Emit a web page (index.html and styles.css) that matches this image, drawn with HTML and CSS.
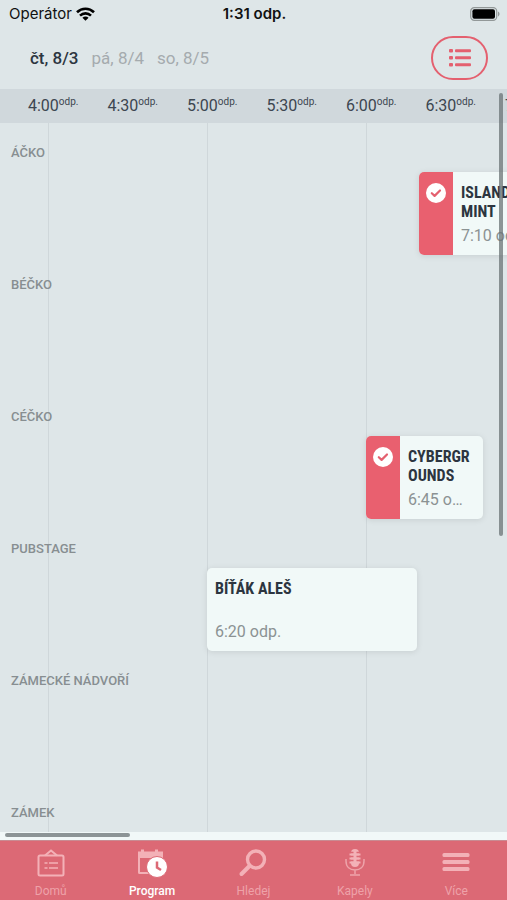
FILE: index.html
```html
<!DOCTYPE html>
<html lang="cs">
<head>
    <meta charset="UTF-8">
    <meta name="viewport" content="width=device-width, initial-scale=1.0">
    <title>Program</title>
    <link rel="stylesheet" href="styles.css">
</head>
<body>
    <div class="status-bar">
        <div class="carrier">
            <span>Operátor</span>
            <svg width="19" height="14" viewBox="0 0 19 14" fill="none" stroke="#000" stroke-width="2.6">
                <path d="M1 5.2C5.8.5 13.2.5 18 5.2"/>
                <path d="M4 8.6c3.2-3 7.8-3 11 0"/>
                <path d="M9.5 13.8L6.4 10.7c1.8-1.6 4.4-1.6 6.2 0z" fill="#000" stroke="none"/>
            </svg>
        </div>
        <div class="clock">1:31 odp.</div>
        <svg class="battery" width="30" height="14" viewBox="0 0 30 14">
            <rect x="0.7" y="0.7" width="26" height="12.6" rx="3.6" fill="none" stroke="#929898" stroke-width="1.2"/>
            <rect x="2.4" y="2.3" width="22.6" height="9.4" rx="2" fill="#000"/>
            <path d="M28 4.6c2 .8 2 4 0 4.8z" fill="#929898"/>
        </svg>
    </div>

    <header class="header">
        <nav class="days">
            <button type="button" class="day active">čt, 8/3</button>
            <button type="button" class="day">pá, 8/4</button>
            <button type="button" class="day">so, 8/5</button>
        </nav>
        <button type="button" class="list-btn" aria-label="Seznam">
            <svg width="24" height="20" viewBox="0 0 24 20" fill="#e4606f">
                <rect x="1" y="1" width="4" height="3.4" rx="1"/>
                <rect x="7" y="1.2" width="16" height="3" rx="1"/>
                <rect x="1" y="8" width="4" height="3.4" rx="1"/>
                <rect x="7" y="8.2" width="16" height="3" rx="1"/>
                <rect x="1" y="15" width="4" height="3.4" rx="1"/>
                <rect x="7" y="15.2" width="16" height="3" rx="1"/>
            </svg>
        </button>
    </header>

    <main class="schedule">
        <div class="hours">
            <span>4:00<sup>odp.</sup></span>
            <span>4:30<sup>odp.</sup></span>
            <span>5:00<sup>odp.</sup></span>
            <span>5:30<sup>odp.</sup></span>
            <span>6:00<sup>odp.</sup></span>
            <span>6:30<sup>odp.</sup></span>
            <span>7:00<sup>odp.</sup></span>
        </div>

        <!-- --start and --length are minutes from 4:00 -->
        <div class="stages">
            <section class="stage">
                <h2>Áčko</h2>
                <article class="event" style="--start: 140; --length: 50">
                    <div class="event-mark">
                        <svg width="20" height="20" viewBox="0 0 20 20">
                            <circle cx="10" cy="10" r="10" fill="#fff"/>
                            <path d="M5.8 10.2l2.8 2.7 5.4-5.4" fill="none" stroke="#e4606f" stroke-width="2.2" stroke-linecap="round" stroke-linejoin="round"/>
                        </svg>
                    </div>
                    <div class="event-text">
                        <h3>Island Mint</h3>
                        <p>7:10 odp.</p>
                    </div>
                </article>
            </section>
            <section class="stage">
                <h2>Béčko</h2>
            </section>
            <section class="stage">
                <h2>Céčko</h2>
                <article class="event" style="--start: 120; --length: 45">
                    <div class="event-mark">
                        <svg width="20" height="20" viewBox="0 0 20 20">
                            <circle cx="10" cy="10" r="10" fill="#fff"/>
                            <path d="M5.8 10.2l2.8 2.7 5.4-5.4" fill="none" stroke="#e4606f" stroke-width="2.2" stroke-linecap="round" stroke-linejoin="round"/>
                        </svg>
                    </div>
                    <div class="event-text">
                        <h3>Cybergrounds</h3>
                        <p>6:45 odp.</p>
                    </div>
                </article>
            </section>
            <section class="stage">
                <h2>Pubstage</h2>
                <article class="event" style="--start: 60; --length: 80">
                    <div class="event-text">
                        <h3>Bíťák Aleš</h3>
                        <p>6:20 odp.</p>
                    </div>
                </article>
            </section>
            <section class="stage">
                <h2>Zámecké nádvoří</h2>
            </section>
            <section class="stage">
                <h2>Zámek</h2>
            </section>
        </div>

        <div class="scroll-y"></div>
        <div class="scroll-x"></div>
    </main>

    <nav class="tab-bar">
        <a href="#domu" class="tab">
            <svg width="32" height="32" viewBox="0 0 32 32" fill="none" stroke="currentColor" stroke-width="2">
                <rect x="3.5" y="8.5" width="25" height="20" rx="1.5"/>
                <path d="M10 8.5l6-5 6 5"/>
                <path d="M9.5 16h3M14 16h9M9.5 21h3M14 21h9" stroke-width="1.3"/>
            </svg>
            <span>Domů</span>
        </a>
        <a href="#program" class="tab active">
            <svg width="32" height="32" viewBox="0 0 32 32">
                <g fill="#f3b1b7">
                    <path d="M2 4.500h3V2.500h3v2h11V2.500h3v2h5V11H2z"/>
                    <path d="M2 10h2v15h9v2H3.500Q2 27 2 25.500z"/>
                </g>
                <circle cx="21" cy="20" r="10.500" fill="#fff" stroke="#dc6975" stroke-width="1"/>
                <path d="M21 14.500V20.500l4 2.500" fill="none" stroke="#dc6975" stroke-width="2.500"/>
            </svg>
            <span>Program</span>
        </a>
        <a href="#hledej" class="tab">
            <svg width="32" height="32" viewBox="0 0 32 32" fill="none" stroke="currentColor">
                <circle cx="19" cy="12.500" r="8.500" stroke-width="3.400"/>
                <path d="M12.500 19L4.500 27" stroke-width="4" stroke-linecap="round"/>
            </svg>
            <span>Hledej</span>
        </a>
        <a href="#kapely" class="tab">
            <svg width="32" height="32" viewBox="0 0 32 32" fill="none" stroke="currentColor">
                <rect x="12" y="2" width="8" height="18" rx="4" fill="currentColor" stroke="none"/>
                <path d="M10.500 7.500h3M18.500 7.500h3M10.500 11.500h3M18.500 11.500h3M10.500 15.500h3M18.500 15.500h3" stroke-width="1.800"/>
                <path d="M12 5.500h2.500M17.500 5.500H20M12 9.500h2.500M17.500 9.500H20M12 13.500h2.500M17.500 13.500H20" stroke="#dc6975" stroke-width="1.600"/>
                <path d="M7 12v2c0 6 4 9 9 9s9-3 9-9v-2M16 23v4M11 28h10" stroke-width="1.500" opacity="0.8"/>
            </svg>
            <span>Kapely</span>
        </a>
        <a href="#vice" class="tab">
            <svg width="32" height="32" viewBox="0 0 32 32" fill="currentColor">
                <rect x="2.500" y="6" width="27" height="4" rx="1.500"/>
                <rect x="2.500" y="13" width="27" height="4" rx="1.500"/>
                <rect x="2.500" y="20" width="27" height="4" rx="1.500"/>
            </svg>
            <span>Více</span>
        </a>
    </nav>
</body>
</html>
```

FILE: styles.css
```css
* {
    margin: 0;
    padding: 0;
    box-sizing: border-box;
}

body {
    --hour: 159px;
    display: flex;
    flex-direction: column;
    height: 100vh;
    overflow: hidden;
    background: #dee6e8;
    color: #2c3540;
    font-family: Roboto, sans-serif;
}

button {
    background: none;
    border: none;
    font-family: inherit;
    cursor: pointer;
}

.status-bar {
    display: grid;
    grid-template-columns: 1fr auto 1fr;
    align-items: center;
    height: 27px;
    padding: 0 7px 0 9px;
    color: #111;
    font-family: Inter, sans-serif;
    font-size: 15px;
}

.carrier {
    display: flex;
    align-items: center;
    gap: 4px;
}

.clock {
    font-weight: 600;
}

.battery {
    justify-self: end;
}

.header {
    display: flex;
    align-items: center;
    justify-content: space-between;
    height: 62px;
    padding: 0 19px 0 30px;
}

.days {
    display: flex;
    gap: 13px;
}

.day {
    color: #a5abae;
    font-size: 17px;
}

.day.active {
    color: #2c3540;
    font-weight: 500;
}

.list-btn {
    display: flex;
    align-items: center;
    justify-content: center;
    width: 57px;
    height: 44px;
    border: 2px solid #e4606f;
    border-radius: 22px;
}

.schedule {
    position: relative;
    display: flex;
    flex: 1;
    flex-direction: column;
    min-height: 0;
    overflow: hidden;
    padding-bottom: 8px;
    background: linear-gradient(#f1f8f8, #f1f8f8) bottom / 100% 8px no-repeat;
}

.hours {
    display: grid;
    flex-shrink: 0;
    grid-auto-columns: calc(var(--hour) / 2);
    grid-auto-flow: column;
    height: 34px;
    padding-left: 28px;
    background: #d0d8dc;
    color: #3c4650;
    font-size: 16px;
    line-height: 34px;
}

.hours sup {
    font-size: 10px;
    line-height: 1;
    vertical-align: 6px;
}

.stages {
    flex: 1;
    min-height: 0;
    overflow: hidden;
    background: linear-gradient(#cfd7da, #cfd7da) 48px 0 / 1px 100% no-repeat,
        linear-gradient(#cfd7da, #cfd7da) calc(48px + var(--hour)) 0 / 1px 100% no-repeat,
        linear-gradient(#cfd7da, #cfd7da) calc(48px + var(--hour) * 2) 0 / 1px 100% no-repeat;
}

.stage {
    height: 132px;
    padding-top: 21px;
}

.stage h2 {
    margin-left: 11px;
    color: #878e91;
    font-size: 13px;
    font-weight: 500;
    line-height: 18px;
    text-transform: uppercase;
}

.event {
    display: flex;
    width: calc(var(--length) / 60 * var(--hour) - 2px);
    height: 83px;
    margin-top: 10px;
    margin-left: calc(48px + var(--start) / 60 * var(--hour));
    overflow: hidden;
    background: #f1f9f8;
    border-radius: 5px;
    box-shadow: 0 1px 6px rgba(0, 0, 0, 0.1);
}

.event-mark {
    flex-shrink: 0;
    width: 34px;
    padding: 11px 7px;
    background: #e9606f;
}

.event-text {
    display: flex;
    flex: 1;
    flex-direction: column;
    justify-content: space-between;
    min-width: 0;
    padding: 11px 13px 9px 8px;
}

.event h3 {
    color: #2c3540;
    font-family: "Roboto Condensed", Roboto, sans-serif;
    font-size: 16px;
    font-weight: 700;
    line-height: 19px;
    overflow-wrap: anywhere;
    text-transform: uppercase;
}

.event p {
    overflow: hidden;
    color: #8b9293;
    font-size: 16px;
    line-height: 20px;
    text-overflow: ellipsis;
    white-space: nowrap;
}

/* scroll indicators over the timetable */
.scroll-y,
.scroll-x {
    position: absolute;
    background: rgba(105, 115, 117, 0.75);
    border-radius: 2px;
}

.scroll-y {
    top: 4px;
    right: 4px;
    width: 4px;
    height: 59%;
}

.scroll-x {
    bottom: 3px;
    left: 5px;
    width: 125px;
    height: 4px;
}

.tab-bar {
    display: grid;
    grid-template-columns: repeat(5, 1fr);
    height: 60px;
    background: #dc6975;
    border-top: 1px solid #c98b92;
}

.tab {
    display: flex;
    flex-direction: column;
    align-items: center;
    padding-top: 6px;
    color: #f3b1b7;
    font-size: 12px;
    line-height: 14px;
    text-decoration: none;
}

.tab span {
    margin-top: 5px;
    opacity: 0.8;
}

.tab.active {
    color: #fff;
}

.tab.active span {
    font-weight: 500;
    opacity: 1;
}
```
